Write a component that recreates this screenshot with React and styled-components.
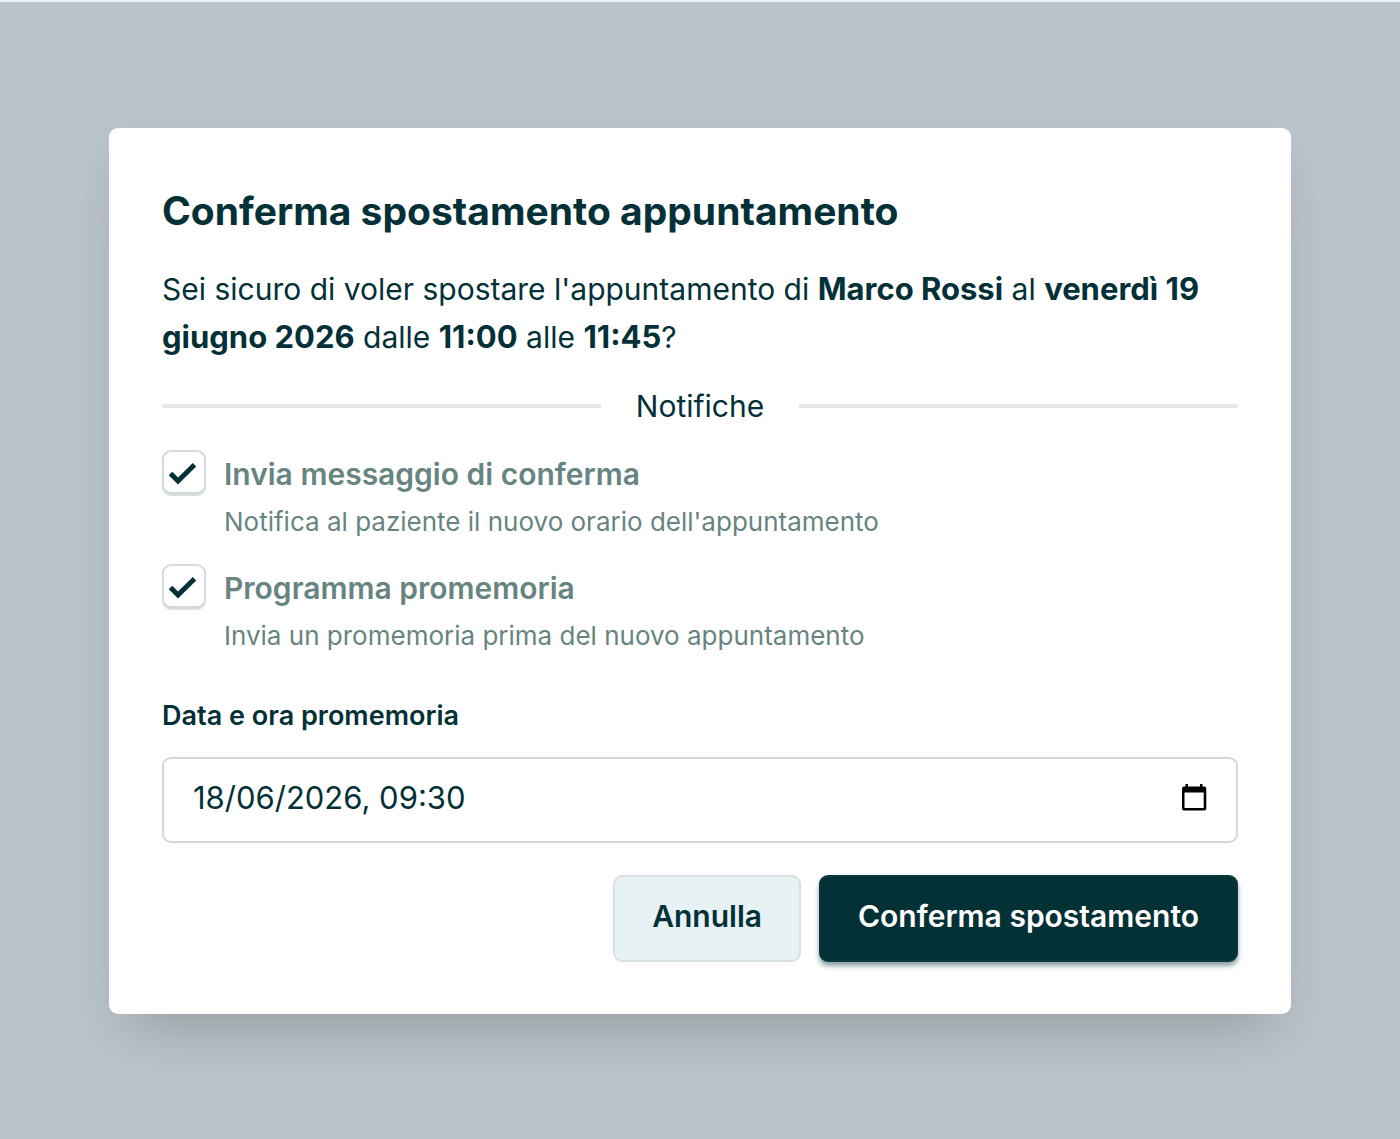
import { useState } from 'react'
import styled, { createGlobalStyle } from 'styled-components'

const GlobalStyle = createGlobalStyle`
  * {
    box-sizing: border-box;
  }
  body {
    margin: 0;
    font-family: Inter, "Liberation Sans", sans-serif;
    color: #033137;
    background-color: #bbc3cb;
  }
`

const Overlay = styled.div`
  min-height: 100vh;
  display: flex;
  align-items: center;
  justify-content: center;
  padding: 49px 48px 48px;
  border-top: 2px solid #e7f0f8;
`

const Dialog = styled.form`
  width: 100%;
  max-width: 1182px;
  padding: 53px 53px 52px;
  border-radius: 9px;
  background-color: #fff;
  box-shadow: 0 40px 50px -26px rgba(100, 100, 95, 0.3), 0 12px 44px -4px rgba(150, 160, 155, 0.3);
`

const Title = styled.h1`
  margin: 0 0 24px;
  font-size: 39px;
  font-weight: 700;
  line-height: 60px;
`

const Message = styled.p`
  margin: 0 0 21px;
  font-size: 30px;
  line-height: 48px;

  strong {
    font-size: 31px;
    line-height: 40px;
  }
`

const Divider = styled.div`
  display: flex;
  align-items: center;
  gap: 35px;
  margin-bottom: 20px;
  font-size: 30px;
  line-height: 48px;

  &::before,
  &::after {
    content: "";
    flex: 1;
    height: 4px;
    background-color: #e6e8e8;
  }
`

const Options = styled.div`
  display: flex;
  flex-direction: column;
  gap: 18px;
  margin-bottom: 36px;
`

const Option = styled.div`
  display: flex;
  align-items: flex-start;
  gap: 18px;
`

const CheckWrap = styled.span`
  display: grid;
  flex: none;

  & > * {
    grid-area: 1 / 1;
  }
`

const Checkbox = styled.input`
  appearance: none;
  width: 44px;
  height: 44px;
  margin: 0;
  border: 2px solid #d3dcdc;
  border-radius: 9px;
  background-color: #fff;
  box-shadow: 0 2px 1px rgba(60, 80, 80, 0.2);
  cursor: pointer;

  & + svg {
    visibility: hidden;
    pointer-events: none;
  }
  &:checked + svg {
    visibility: visible;
  }
`

const OptionText = styled.div`
  display: flex;
  flex-direction: column;
  color: #678481;
  line-height: 48px;
`

const OptionLabel = styled.label`
  font-size: 30px;
  font-weight: 600;
`

const OptionHint = styled.span`
  font-size: 26px;
`

const FieldLabel = styled.label`
  display: block;
  margin-bottom: 21px;
  font-size: 27px;
  font-weight: 600;
  line-height: 40px;
`

const Field = styled.div`
  display: flex;
  align-items: center;
  height: 86px;
  margin-bottom: 32px;
  padding: 0 29px 4px;
  border: 2px solid #cfd8d8;
  border-radius: 9px;
`

const DateInput = styled.input`
  flex: 1;
  min-width: 0;
  padding: 0;
  border: 0;
  outline: none;
  background: none;
  color: inherit;
  font-family: inherit;
  font-size: 31px;
  line-height: 48px;
`

const PickerButton = styled.button`
  display: flex;
  padding: 0;
  border: 0;
  background: none;
  color: #000;
  cursor: pointer;
`

const Actions = styled.div`
  display: flex;
  justify-content: flex-end;
  gap: 18px;
`

const Button = styled.button`
  height: 87px;
  padding: 0 37px 6px;
  border: 2px solid ${(props) => (props.$primary ? '#07393e' : '#d8e1e2')};
  border-radius: 9px;
  background-color: ${(props) => (props.$primary ? '#043136' : '#e8f1f4')};
  box-shadow: ${(props) => (props.$primary ? '0 4px 5px rgba(3, 49, 55, 0.45)' : 'none')};
  color: ${(props) => (props.$primary ? '#fff' : '#033137')};
  font-family: inherit;
  font-size: 30px;
  font-weight: 600;
  cursor: pointer;
`

const CheckIcon = () => (
  <svg width="44" height="44" viewBox="0 0 44 44" fill="none" aria-hidden="true">
    <path d="M8.5 23.5L16 31L32.5 14.8" stroke="#033137" strokeWidth="5" />
  </svg>
)

const CalendarIcon = () => (
  <svg width="26" height="28" viewBox="0 0 26 28" aria-hidden="true">
    <path
      fill="currentColor"
      fillRule="evenodd"
      d="M4.500 0h2.500v2.500h12V0h2.500v2.500h1.800a2 2 0 0 1 2 2v20a2 2 0 0 1-2 2H3a2 2 0 0 1-2-2v-20a2 2 0 0 1 2-2h1.500zM3.500 8.600v15.400h19.200V8.600z"
    />
  </svg>
)

const CheckOption = ({ id, label, hint }) => {
  const [checked, setChecked] = useState(true)

  return (
    <Option>
      <CheckWrap>
        <Checkbox
          id={id}
          type="checkbox"
          checked={checked}
          onChange={(e) => setChecked(e.target.checked)}
          aria-describedby={`${id}-hint`}
        />
        <CheckIcon />
      </CheckWrap>
      <OptionText>
        <OptionLabel htmlFor={id}>{label}</OptionLabel>
        <OptionHint id={`${id}-hint`}>{hint}</OptionHint>
      </OptionText>
    </Option>
  )
}

const App = () => {
  return (
    <>
      <GlobalStyle />
      <Overlay>
        <Dialog role="dialog" aria-labelledby="title" onSubmit={(e) => e.preventDefault()}>
          <Title id="title">Conferma spostamento appuntamento</Title>
          <Message>
            Sei sicuro di voler spostare l'appuntamento di <strong>Marco Rossi</strong> al{' '}
            <strong>venerdì 19 giugno 2026</strong> dalle <strong>11:00</strong> alle{' '}
            <strong>11:45</strong>?
          </Message>
          <Divider>Notifiche</Divider>
          <Options>
            <CheckOption
              id="conferma"
              label="Invia messaggio di conferma"
              hint="Notifica al paziente il nuovo orario dell'appuntamento"
            />
            <CheckOption
              id="promemoria"
              label="Programma promemoria"
              hint="Invia un promemoria prima del nuovo appuntamento"
            />
          </Options>
          <FieldLabel htmlFor="data">Data e ora promemoria</FieldLabel>
          <Field>
            <DateInput id="data" type="text" defaultValue="18/06/2026, 09:30" />
            <PickerButton type="button" aria-label="Apri calendario">
              <CalendarIcon />
            </PickerButton>
          </Field>
          <Actions>
            <Button type="button">Annulla</Button>
            <Button type="submit" $primary>Conferma spostamento</Button>
          </Actions>
        </Dialog>
      </Overlay>
    </>
  )
}

export default App
